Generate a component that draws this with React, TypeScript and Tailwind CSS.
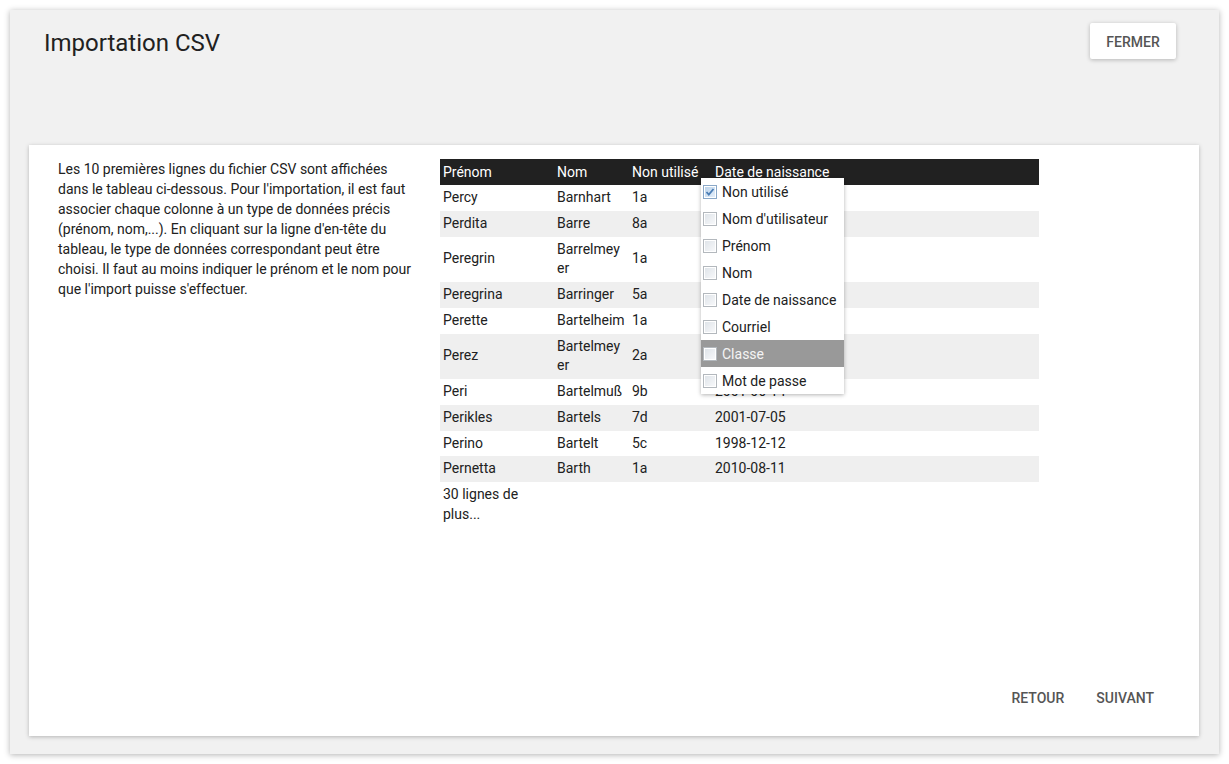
import React from "react";

type Row = { first: string; last: string; unused: string; date: string };

const rows: Row[] = [
  { first: "Percy", last: "Barnhart", unused: "1a", date: "2003-04-12" },
  { first: "Perdita", last: "Barre", unused: "8a", date: "1999-02-21" },
  { first: "Peregrin", last: "Barrelmeyer", unused: "1a", date: "2004-11-03" },
  { first: "Peregrina", last: "Barringer", unused: "5a", date: "2006-05-17" },
  { first: "Perette", last: "Bartelheim", unused: "1a", date: "2010-01-29" },
  { first: "Perez", last: "Bartelmeyer", unused: "2a", date: "2009-09-08" },
  { first: "Peri", last: "Bartelmuß", unused: "9b", date: "2001-06-14" },
  { first: "Perikles", last: "Bartels", unused: "7d", date: "2001-07-05" },
  { first: "Perino", last: "Bartelt", unused: "5c", date: "1998-12-12" },
  { first: "Pernetta", last: "Barth", unused: "1a", date: "2010-08-11" },
];

const options = [
  "Non utilisé",
  "Nom d'utilisateur",
  "Prénom",
  "Nom",
  "Date de naissance",
  "Courriel",
  "Classe",
  "Mot de passe",
];

function Box({ checked }: { checked: boolean }) {
  return (
    <svg width="14" height="14" viewBox="0 0 14 14" className="shrink-0 mt-[5px]">
      <defs>
        <linearGradient id={checked ? "gc" : "gu"} x1="0" y1="0" x2="1" y2="1">
          <stop offset="0" stopColor={checked ? "#bcd3ea" : "#dfe4e9"} />
          <stop offset="1" stopColor={checked ? "#e3eefa" : "#f7f8fa"} />
        </linearGradient>
      </defs>
      <rect x="0.5" y="0.5" width="13" height="13" fill="#fff" stroke={checked ? "#8aa8c8" : "#b3b8bd"} />
      <rect x="2" y="2" width="10" height="10" fill={`url(#${checked ? "gc" : "gu"})`} />
      {checked && <path d="M3.5 7 L5.8 9.6 L10.5 4" fill="none" stroke="#4a7db5" strokeWidth="1.8" />}
    </svg>
  );
}

export default function App() {
  return (
    <div className="min-h-screen bg-white p-[10px] font-['Roboto',sans-serif] text-[#212121]">
      <div className="w-[1209px] h-[744px] bg-[#f1f1f1] shadow-[0_1px_6px_rgba(0,0,0,0.3)] flex flex-col">
        {/* Header */}
        <div className="h-[135px] flex justify-between items-start">
          <h1 className="ml-[34px] mt-[17px] text-[24px] leading-[32px] font-normal">Importation CSV</h1>
          <button className="mt-[13px] mr-[43px] w-[86px] h-[36px] pt-[3px] bg-white rounded-[2px] shadow-[0_1px_4px_rgba(0,0,0,0.25)] text-[14px] font-medium text-[#555] uppercase">
            Fermer
          </button>
        </div>

        {/* Body card */}
        <div className="ml-[19px] mr-[20px] h-[591px] bg-white shadow-[0_1px_4px_rgba(0,0,0,0.25)] flex flex-col">
          <div className="flex-1 flex pt-[14px]">
            <div className="w-[411px] pl-[29px] pr-[24px]">
              <p className="text-[14px] leading-[20px]">
                Les 10 premières lignes du fichier CSV sont affichées dans le tableau ci-dessous. Pour l'importation, il est
                faut associer chaque colonne à un type de données précis (prénom, nom,...). En cliquant sur la ligne
                d'en-tête du tableau, le type de données correspondant peut être choisi. Il faut au moins indiquer le
                prénom et le nom pour que l'import puisse s'effectuer.
              </p>
            </div>
            <div className="relative">
              <table className="w-[599px] border-collapse table-fixed text-[14px] leading-[19.75px]">
                <colgroup>
                  <col className="w-[114px]" />
                  <col className="w-[75px]" />
                  <col className="w-[83px]" />
                  <col />
                </colgroup>
                <thead>
                  <tr className="bg-[#212121] text-white leading-[20px]">
                    <th className="px-[3px] py-[3px] text-left font-normal">Prénom</th>
                    <th className="px-[3px] py-[3px] text-left font-normal">Nom</th>
                    <th className="px-[3px] py-[3px] text-left font-normal whitespace-nowrap">Non utilisé</th>
                    <th className="px-[3px] py-[3px] text-left font-normal">Date de naissance</th>
                  </tr>
                </thead>
                <tbody>
                  {rows.map((r, i) => (
                    <tr key={r.first} className={i % 2 === 1 ? "bg-[#efefef]" : "bg-white"}>
                      <td className="px-[3px] py-[3px] align-middle">{r.first}</td>
                      <td className="px-[3px] py-[3px] align-middle break-all">{r.last}</td>
                      <td className="px-[3px] py-[3px] align-middle">{r.unused}</td>
                      <td className="px-[3px] py-[3px] align-middle">{r.date}</td>
                    </tr>
                  ))}
                  <tr>
                    <td className="px-[3px] py-[3px]">
                      <div className="w-[80px]">30 lignes de plus...</div>
                    </td>
                    <td />
                    <td />
                    <td />
                  </tr>
                </tbody>
              </table>

              {/* Column type dropdown */}
              <div className="absolute left-[261px] top-[19px] w-[143px] bg-white shadow-[0_1px_4px_rgba(0,0,0,0.3)]">
                {options.map((o, i) => (
                  <div
                    key={o}
                    className={`h-[27px] flex items-start gap-[5px] pl-[2px] pt-[2px] text-[14px] leading-[24px] ${
                      o === "Classe" ? "bg-[#999999] text-[#f4f4f4]" : "text-[#212121]"
                    }`}
                  >
                    <Box checked={i === 0} />
                    <span>{o}</span>
                  </div>
                ))}
              </div>
            </div>
          </div>

          {/* Footer actions */}
          <div className="flex justify-end mr-[29px] mb-[21px]">
            <button className="h-[36px] px-4 pt-[2px] text-[14px] font-medium text-[#555] uppercase">Retour</button>
            <button className="h-[36px] px-4 pt-[2px] text-[14px] font-medium text-[#555] uppercase">Suivant</button>
          </div>
        </div>
        <div className="flex-1" />
      </div>
    </div>
  );
}
